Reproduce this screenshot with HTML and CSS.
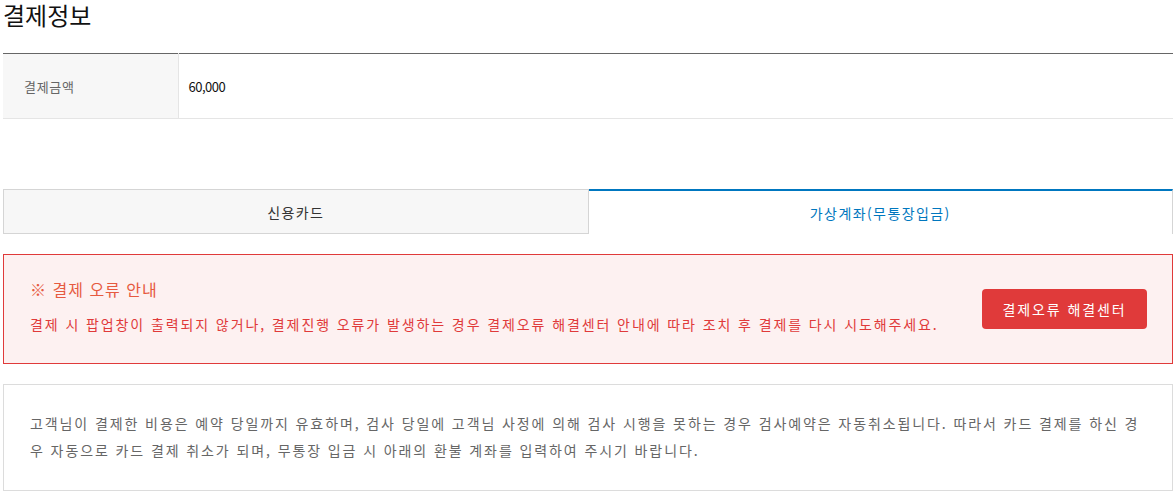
FILE: index.html
```html
<!DOCTYPE html>
<html lang="ko">
<head>
<meta charset="utf-8">
<link rel="stylesheet" href="styles.css">
</head>
<body>
<div class="page">
  <h2 class="title">결제정보</h2>
  <table class="info-table">
    <tr>
      <th>결제금액</th>
      <td>60,000</td>
    </tr>
  </table>

  <div class="tabs">
    <div class="tab">신용카드</div>
    <div class="tab active">가상계좌(무통장입금)</div>
  </div>

  <div class="alert">
    <div class="alert-text">
      <p class="alert-title">※ 결제 오류 안내</p>
      <p class="alert-desc">결제 시 팝업창이 출력되지 않거나, 결제진행 오류가 발생하는 경우 결제오류 해결센터 안내에 따라 조치 후 결제를 다시 시도해주세요.</p>
    </div>
    <a class="alert-btn" href="#">결제오류 해결센터</a>
  </div>

  <div class="notice">
    <p>고객님이 결제한 비용은 예약 당일까지 유효하며, 검사 당일에 고객님 사정에 의해 검사 시행을 못하는 경우 검사예약은 자동취소됩니다. 따라서 카드 결제를 하신 경우 자동으로 카드 결제 취소가 되며, 무통장 입금 시 아래의 환불 계좌를 입력하여 주시기 바랍니다.</p>
  </div>
</div>
</body>
</html>
```

FILE: styles.css
```css
* { box-sizing: border-box; }
html, body {
  margin: 0;
  padding: 0;
  background: #fff;
}
body {
  font-family: "Noto Sans CJK KR", "Noto Sans", sans-serif;
  color: #333;
}
.page {
  width: 1170px;
  margin-left: 3px;
}
.title {
  margin: 0;
  padding-top: 1px;
  font-size: 24px;
  font-weight: 400;
  line-height: 28px;
  color: #111;
  height: 53px;
}
.info-table {
  width: 100%;
  border-collapse: collapse;
  border-top: 1px solid #666;
  border-bottom: 1px solid #e5e5e5;
}
.info-table th {
  width: 175px;
  height: 65px;
  padding: 0 0 0 21px;
  background: #f7f7f7;
  border-right: 1px solid #e5e5e5;
  text-align: left;
  font-weight: 400;
  font-size: 13px;
  letter-spacing: 0.7px;
  color: #666;
}
.info-table td {
  padding: 0 0 0 10px;
  font-size: 13px;
  color: #111;
  letter-spacing: -0.5px;
}
.tabs {
  display: flex;
  margin-top: 70px;
}
.tab {
  flex: 1;
  height: 45px;
  display: flex;
  align-items: center;
  justify-content: center;
  font-size: 14px;
  letter-spacing: 1.4px;
  color: #333;
  background: #f7f7f7;
  border: 1px solid #d5d5d5;
}
.tab.active {
  background: #fff;
  color: #0077be;
  border: 0;
  border-top: 2px solid #0077c0;
  border-right: 1px solid #d5d5d5;
}
.alert {
  margin-top: 20px;
  height: 110px;
  border: 1px solid #e03a3a;
  background: #fdf1f1;
  display: flex;
  align-items: center;
  justify-content: space-between;
  padding: 0 25px 0 26px;
}
.alert-text { margin-top: -6px; }
.alert-text p { margin: 0; }
.alert-title {
  font-size: 16px;
  line-height: 22px;
  letter-spacing: 1px;
  color: #e65a40;
}
.alert-text .alert-desc {
  margin-top: 14px;
  font-size: 14px;
  line-height: 20px;
  letter-spacing: 1.9px;
  color: #e03a3a;
}
.alert-btn {
  display: flex;
  align-items: center;
  justify-content: center;
  width: 165px;
  height: 40px;
  border-radius: 4px;
  background: #e03a3a;
  color: #fff;
  font-size: 14px;
  letter-spacing: 1.9px;
  text-decoration: none;
}
.notice {
  margin-top: 20px;
  border: 1px solid #dcdcdc;
  padding: 25px 28px 26px 26px;
}
.notice p {
  margin: 0;
  font-size: 14px;
  line-height: 27px;
  letter-spacing: 1.9px;
  color: #666;
}
```
